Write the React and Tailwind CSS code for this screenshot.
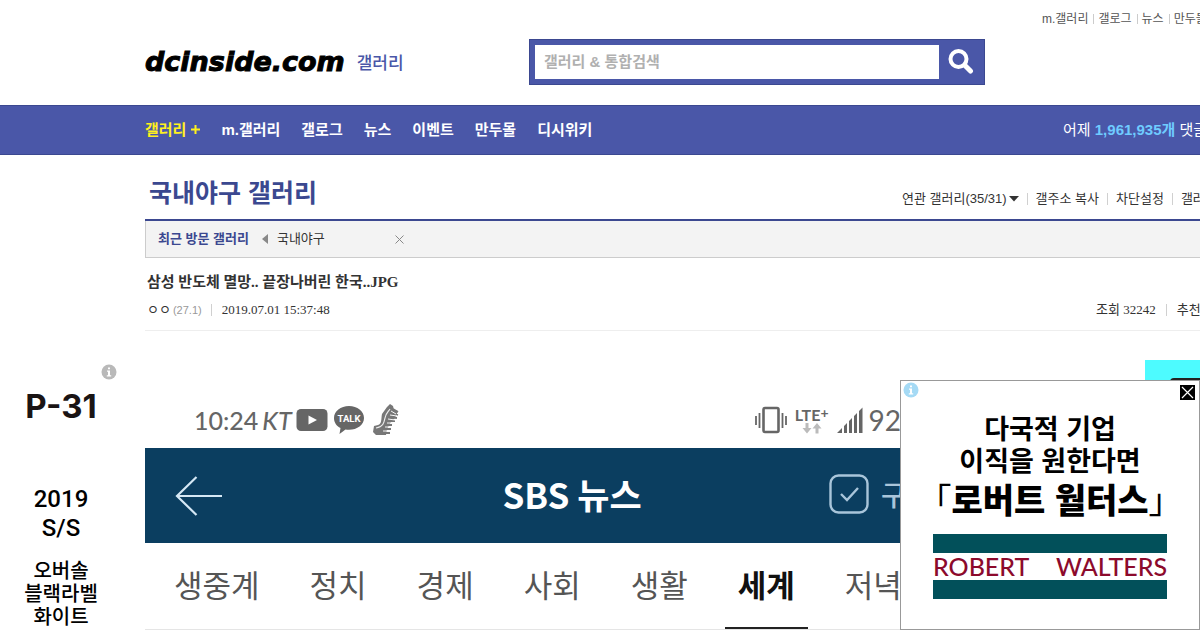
import React, { useState } from 'react';

const topLinks = ['m.갤러리', '갤로그', '뉴스', '만두몰'];
const navLinks = ['m.갤러리', '갤로그', '뉴스', '이벤트', '만두몰', '디시위키'];
const newsTabs = ['생중계', '정치', '경제', '사회', '생활', '세계', '저녁'];

function InfoIcon({ className }) {
  return (
    <svg viewBox="0 0 16 16" className={className} aria-hidden="true">
      <circle cx="8" cy="8" r="7.5" fill="currentColor" />
      <path d="M7 3.4h2v1.9H7zM6 6.6h3v4.6h1.2v1.2H5.8v-1.2H7V7.8H6z" fill="#fff" />
    </svg>
  );
}

function Divider() {
  return <span className="h-3 w-px shrink-0 bg-[#d0d0d0]" />;
}

function Header() {
  const [query, setQuery] = useState('');

  return (
    <header>
      <div className="flex h-[105px] items-start pl-[145px]">
        <h1 className="flex shrink-0 items-center gap-3 pt-[42px]">
          <a
            href="#home"
            className="font-['DejaVu_Sans'] text-[27px] leading-9 font-bold text-black italic [-webkit-text-stroke:1px_#000]"
          >
            dcinside.com
          </a>
          <a href="#gallery" className="pt-1 text-[17px] leading-9 font-medium text-[#4a57a8]">
            갤러리
          </a>
        </h1>

        <form
          className="mt-[39px] ml-auto flex h-[46px] w-[456px] shrink-0 border border-[#3b4890] bg-[#4a57a8] p-[5px]"
          onSubmit={(e) => e.preventDefault()}
        >
          <input
            type="text"
            aria-label="갤러리 & 통합검색"
            placeholder="갤러리 & 통합검색"
            value={query}
            onChange={(e) => setQuery(e.target.value)}
            className="min-w-0 flex-1 bg-white px-[9px] text-[15px] font-bold text-gray-700 outline-none placeholder:text-[#b0b0b0]"
          />
          <button type="submit" aria-label="검색" className="flex w-10 items-center justify-center pl-1">
            <svg viewBox="0 0 26 26" className="size-[26px]" fill="none" stroke="#fff">
              <circle cx="10.5" cy="10" r="8" strokeWidth="4" />
              <path d="M17.5 17l5 5" strokeWidth="5" strokeLinecap="round" />
            </svg>
          </button>
        </form>

        <ul className="ml-[57px] flex w-[158px] shrink-0 items-center overflow-hidden pt-[9px] text-xs leading-5 whitespace-nowrap text-[#555]">
          {topLinks.map((label, i) => (
            <li key={label} className="flex shrink-0 items-center">
              {i > 0 && <span className="mr-1 ml-[5px] h-[10px] w-px bg-[#ccc]" />}
              <a href="#top">{label}</a>
            </li>
          ))}
        </ul>
      </div>

      <nav className="flex h-[50px] items-center border-y border-[#3b4890] bg-[#4a57a8] pl-[145px] text-[15px] whitespace-nowrap text-white">
        <ul className="flex shrink-0 items-center gap-[21px] font-bold">
          <li>
            <a href="#gallery" className="flex items-center gap-[5px] text-[#fff11d]">
              갤러리
              <svg viewBox="0 0 9 9" className="mb-[2px] size-[9px]" aria-hidden="true">
                <path d="M3.5 0h2v3.5H9v2H5.5V9h-2V5.5H0v-2h3.5z" fill="currentColor" />
              </svg>
            </a>
          </li>
          {navLinks.map((label) => (
            <li key={label}>
              <a href="#nav">{label}</a>
            </li>
          ))}
        </ul>
        <p className="ml-auto w-[137px] shrink-0 overflow-hidden">
          어제 <strong className="text-[#6fcbff]">1,961,935개</strong> 댓글
        </p>
      </nav>
    </header>
  );
}

function SideAd() {
  return (
    <aside className="w-[145px] shrink-0 pt-[209px] text-center text-[#1a1414]">
      <InfoIcon className="ml-[101px] size-4 text-[#b9b9b9]" />
      <p className="mr-[23px] mt-1 font-['Inter'] text-[33px] leading-[44px] font-bold">P-31</p>
      <p className="mr-[23px] mt-[57px] font-['Roboto'] text-2xl leading-[29px] font-medium text-black">
        2019
        <br />
        S/S
      </p>
      <p className="mr-[23px] mt-[17px] text-xl leading-[23px] font-medium text-black">
        오버솔
        <br />
        블랙라벨
        <br />
        화이트
      </p>
    </aside>
  );
}

function StatusBar() {
  return (
    <div className="flex h-[88px] items-center pt-8 pr-[96px] pl-[49px] font-['Lato'] text-[#666]">
      <span className="text-[25px] leading-8 font-medium">10:24</span>
      <span className="ml-1 text-[25px] leading-8 font-medium italic">KT</span>
      <svg viewBox="0 0 32 24" className="ml-1 h-6 w-8" aria-hidden="true">
        <rect x="0.5" y="1" width="31" height="22" rx="4.5" fill="#666" />
        <path d="M12.5 7.5v9l8.5-4.5z" fill="#fff" />
      </svg>
      <svg viewBox="0 0 30 28" className="ml-[6px] h-7 w-[30px]" aria-hidden="true">
        <path d="M15 0C6.700 0 0 5 0 12c0 4.500 2.500 8 6.500 10l-1 6 6-4.500c1 .2 2.300 .3 3.500 .3 8.300 0 15-5 15-11.800S23.300 0 15 0z" fill="#666" />
        <text x="15" y="15.5" textAnchor="middle" fontFamily="Roboto" fontSize="9.5" fontWeight="700" fill="#fff">
          TALK
        </text>
      </svg>
      <svg viewBox="0 0 26 32" className="ml-[9px] h-8 w-[26px]" fill="none" aria-hidden="true">
        <path d="M1 22l4-1c4-1 3-6 4-11l5-7 3-3 3 2 1 4 4 1-3 7-4 4-4 7-1 6H3l-3-3z" fill="#777" />
        <path d="M3 24c7-1 8-5 9-10s3-6 5-9" stroke="#eee" strokeWidth="1.200" />
        <path d="M20 5l5 3M18 9l7 2M16 13l8 1M15 17l7 0M13 21l6 0M11 25l7 0M8 29l9 0" stroke="#777" strokeWidth="1.800" />
        <path d="M18 7l5 3M17 11l7 1M15 15l7 1M14 19l6 0M12 23l6 0M10 27l7 0" stroke="#f5f5f5" strokeWidth="1" />
      </svg>

      <svg viewBox="0 0 32 28" className="ml-auto h-7 w-8" fill="none" stroke="#666" aria-hidden="true">
        <rect x="8.500" y="2" width="15" height="24" rx="1.500" strokeWidth="2.600" />
        <path d="M1 10v9M4.500 7v15M27.500 7v15M31 10v9" strokeWidth="1.800" />
      </svg>
      <div className="ml-2 flex flex-col items-center">
        <span className="flex text-base leading-4 font-bold">
          LTE<sup className="top-0 text-sm leading-3">+</sup>
        </span>
        <svg viewBox="0 0 20 11" className="h-[11px] w-5" fill="#bbb" aria-hidden="true">
          <path d="M3.500 0h3v5h3L5 10.500 .5 5h3zM13.500 10.500h3v-5h3L15 0l-4.500 5.500h3z" />
        </svg>
      </div>
      <svg viewBox="0 0 26 26" className="ml-2 size-[26px]" fill="#666" aria-hidden="true">
        <path d="M0 26l5-5v5zM7 19l3-3v10H7zM12 14l3-3v15h-3zM17 9l3-3v20h-3zM22 4l3.500-3.500V26H22z" />
      </svg>
      <span className="ml-[6px] text-[28px] leading-8">92</span>
    </div>
  );
}

function NewsScreen() {
  return (
    <article className="w-full max-w-[852px] overflow-hidden font-['Noto_Sans_CJK_KR',sans-serif]">
      <StatusBar />
      <div className="flex h-[95px] items-center bg-[#0b3e60] pr-[6px] pl-[30px] text-white">
        <button type="button" aria-label="뒤로" className="w-[150px] shrink-0">
          <svg viewBox="0 0 48 40" className="h-10 w-12" fill="none" stroke="#d5e8f5" strokeWidth="2.200">
            <path d="M47 20H2M21.500 1L2 20l19.500 19" />
          </svg>
        </button>
        <h3 className="flex-1 pr-[10px] pb-1 text-center text-[35px] leading-none font-bold">SBS 뉴스</h3>
        <button type="button" className="flex w-[162px] shrink-0 items-center gap-3 pb-1 text-[28px] leading-none font-medium text-[#a9c5da]">
          <svg viewBox="0 0 40 40" className="size-10" fill="none" stroke="currentColor" aria-hidden="true">
            <rect x="1.500" y="1.500" width="37" height="37" rx="8" strokeWidth="2.400" />
            <path d="M12 20l6 6L29 14" strokeWidth="2.400" />
          </svg>
          구독
        </button>
      </div>
      <ul className="flex h-[87px] gap-6 border-b border-[#e5e5e5] pl-4 text-[31px] whitespace-nowrap">
        {newsTabs.map((tab) => (
          <li key={tab} className="flex shrink-0">
            <a
              href="#news"
              className={
                tab === '세계'
                  ? 'border-b-2 border-[#222] px-[13px] leading-[82px] font-bold text-[#111]'
                  : 'px-[13px] leading-[82px] text-[#555]'
              }
            >
              {tab}
            </a>
          </li>
        ))}
      </ul>
    </article>
  );
}

function GalleryView() {
  return (
    <main className="min-w-0 flex-1">
      <div className="flex h-[66px] items-start justify-between border-b-2 border-[#3b4890] pl-1 whitespace-nowrap">
        <h2 className="pt-5 text-[25px] leading-9 font-bold text-[#3b4890]">국내야구 갤러리</h2>
        <div className="flex w-[298px] shrink-0 items-center gap-2 overflow-hidden pt-[34px] text-[13px] leading-5 text-[#333]">
          <button type="button" className="flex shrink-0 items-center gap-[2px]">
            연관 갤러리(35/31)
            <svg viewBox="0 0 10 6" className="h-[6px] w-[10px]" aria-hidden="true">
              <path d="M0 0h10L5 5.500z" fill="#333" />
            </svg>
          </button>
          <Divider />
          <button type="button" className="shrink-0">갤주소 복사</button>
          <Divider />
          <button type="button" className="shrink-0">차단설정</button>
          <Divider />
          <button type="button" className="shrink-0">갤러리</button>
        </div>
      </div>

      <div className="flex h-[37px] items-center border-b border-l border-[#ccc] bg-[#f3f3f3] pl-3 text-[13px]">
        <strong className="text-[#3b4890]">최근 방문 갤러리</strong>
        <button type="button" aria-label="이전" className="ml-[13px]">
          <svg viewBox="0 0 6 10" className="h-[10px] w-[6px]">
            <path d="M6 0v10L0 5z" fill="#888" />
          </svg>
        </button>
        <a href="#recent" className="ml-[9px] text-[#333]">국내야구</a>
        <button type="button" aria-label="삭제" className="ml-[70px]">
          <svg viewBox="0 0 9 9" className="size-[9px]" stroke="#888">
            <path d="M.5 .5l8 8M8.500 .5l-8 8" />
          </svg>
        </button>
      </div>

      <div className="border-b border-[#eee] pt-[14px] pb-[10px] font-['Liberation_Serif','Noto_Sans_CJK_KR',serif] text-[#333]">
        <h3 className="pl-[2px] text-[15px] leading-5 font-bold">
          삼성 반도체 멸망.. 끝장나버린 한국..JPG
        </h3>
        <div className="mt-2 flex items-center pl-[2px] text-[13px] leading-5 whitespace-nowrap">
          <span>ㅇㅇ</span>
          <span className="mr-[9px] ml-[2px] font-['Liberation_Sans'] text-[11px] text-[#999]">(27.1)</span>
          <Divider />
          <time className="ml-[10px]">2019.07.01 15:37:48</time>
          <div className="ml-auto flex w-[104px] shrink-0 items-center gap-[10px] overflow-hidden">
            <span className="shrink-0">조회 32242</span>
            <Divider />
            <span className="shrink-0">추천</span>
          </div>
        </div>
      </div>

      <div className="flex items-start justify-between pt-[29px]">
        <NewsScreen />
        <aside className="flex h-[200px] w-[55px] shrink-0 items-start justify-end bg-[#4dfbff] pt-[18px]">
          <span className="h-1 w-[30px] rounded-tl-sm border-t-2 border-l-2 border-[#222]" />
        </aside>
      </div>
    </main>
  );
}

function PopupAd() {
  const [open, setOpen] = useState(true);
  if (!open) return null;

  return (
    <section className="fixed right-0 bottom-0 h-[250px] w-[300px] border border-[#999] bg-white">
      <InfoIcon className="absolute top-px left-[2px] size-4 text-[#a5daf5]" />
      <button
        type="button"
        aria-label="닫기"
        onClick={() => setOpen(false)}
        className="absolute top-1 right-1 bg-black"
      >
        <svg viewBox="0 0 15 15" className="size-[15px]" stroke="#fff" strokeWidth="1.200">
          <path d="M2 2l11 11M13 2L2 13" />
        </svg>
      </button>
      <p className="pt-[33px] text-center text-[27px] leading-8 font-bold text-black">
        다국적 기업
        <br />
        이직을 원한다면
      </p>
      <p className="flex justify-center text-[34px] leading-[46px] whitespace-nowrap text-black">
        「<strong className="font-black">로버트 월터스</strong>」
      </p>
      <div className="mx-8 mt-[10px] border-y-[19px] border-[#02505a]">
        <p className="flex justify-between font-['Lato'] text-[25px] leading-[27px] font-medium text-[#8c0a2c]">
          <span>ROBERT</span>
          <span>WALTERS</span>
        </p>
      </div>
    </section>
  );
}

export default function App() {
  return (
    <div className="h-screen overflow-hidden bg-white font-['Liberation_Sans','Noto_Sans_CJK_KR',sans-serif]">
      <Header />
      <div className="flex">
        <SideAd />
        <GalleryView />
      </div>
      <PopupAd />
    </div>
  );
}
